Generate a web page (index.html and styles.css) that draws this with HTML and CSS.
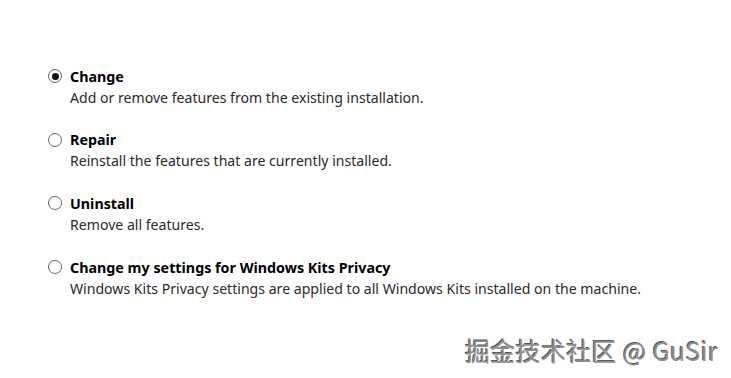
FILE: index.html
```html
<!DOCTYPE html>
<html>
<head>
<meta charset="utf-8">
<link rel="stylesheet" href="styles.css">
</head>
<body>
<div class="options">
  <div class="option">
    <span class="radio checked"></span>
    <div class="text">
      <div class="title">Change</div>
      <div class="desc">Add or remove features from the existing installation.</div>
    </div>
  </div>
  <div class="option">
    <span class="radio"></span>
    <div class="text">
      <div class="title">Repair</div>
      <div class="desc">Reinstall the features that are currently installed.</div>
    </div>
  </div>
  <div class="option">
    <span class="radio"></span>
    <div class="text">
      <div class="title">Uninstall</div>
      <div class="desc">Remove all features.</div>
    </div>
  </div>
  <div class="option">
    <span class="radio"></span>
    <div class="text">
      <div class="title">Change my settings for Windows Kits Privacy</div>
      <div class="desc">Windows Kits Privacy settings are applied to all Windows Kits installed on the machine.</div>
    </div>
  </div>
</div>
<div class="watermark">掘金技术社区 @ GuSir</div>
</body>
</html>
```
FILE: styles.css
```css
html, body {
  margin: 0;
  padding: 0;
  background: #ffffff;
}
body {
  width: 731px;
  height: 378px;
  overflow: hidden;
  font-family: "Noto Sans", "Open Sans", sans-serif;
  color: #1a1a1a;
  position: relative;
}
.options {
  display: flex;
  flex-direction: column;
  gap: 21.7px;
  padding: 65.5px 0 0 48px;
}
.option {
  display: flex;
  align-items: flex-start;
  gap: 8px;
}
.radio {
  width: 12px;
  height: 12px;
  border: 1px solid #666;
  border-radius: 50%;
  margin-top: 3.5px;
  flex: none;
  display: flex;
  align-items: center;
  justify-content: center;
}
.radio.checked::after {
  content: "";
  width: 7px;
  height: 7px;
  border-radius: 50%;
  background: #111;
}
.title {
  font-size: 14.3px;
  font-weight: 700;
  line-height: 21px;
  color: #000;
}
.desc {
  font-size: 14.1px;
  line-height: 21px;
  color: #2a2a2a;
}
.watermark {
  position: absolute;
  left: 465px;
  top: 332px;
  font-family: "Noto Sans CJK SC", sans-serif;
  font-size: 25px;
  letter-spacing: 0.3px;
  color: #8e8e8e;
  text-shadow: 1px 1px 0 #fff, -1px -1px 0 #5a5a5a;
  white-space: nowrap;
}
```
